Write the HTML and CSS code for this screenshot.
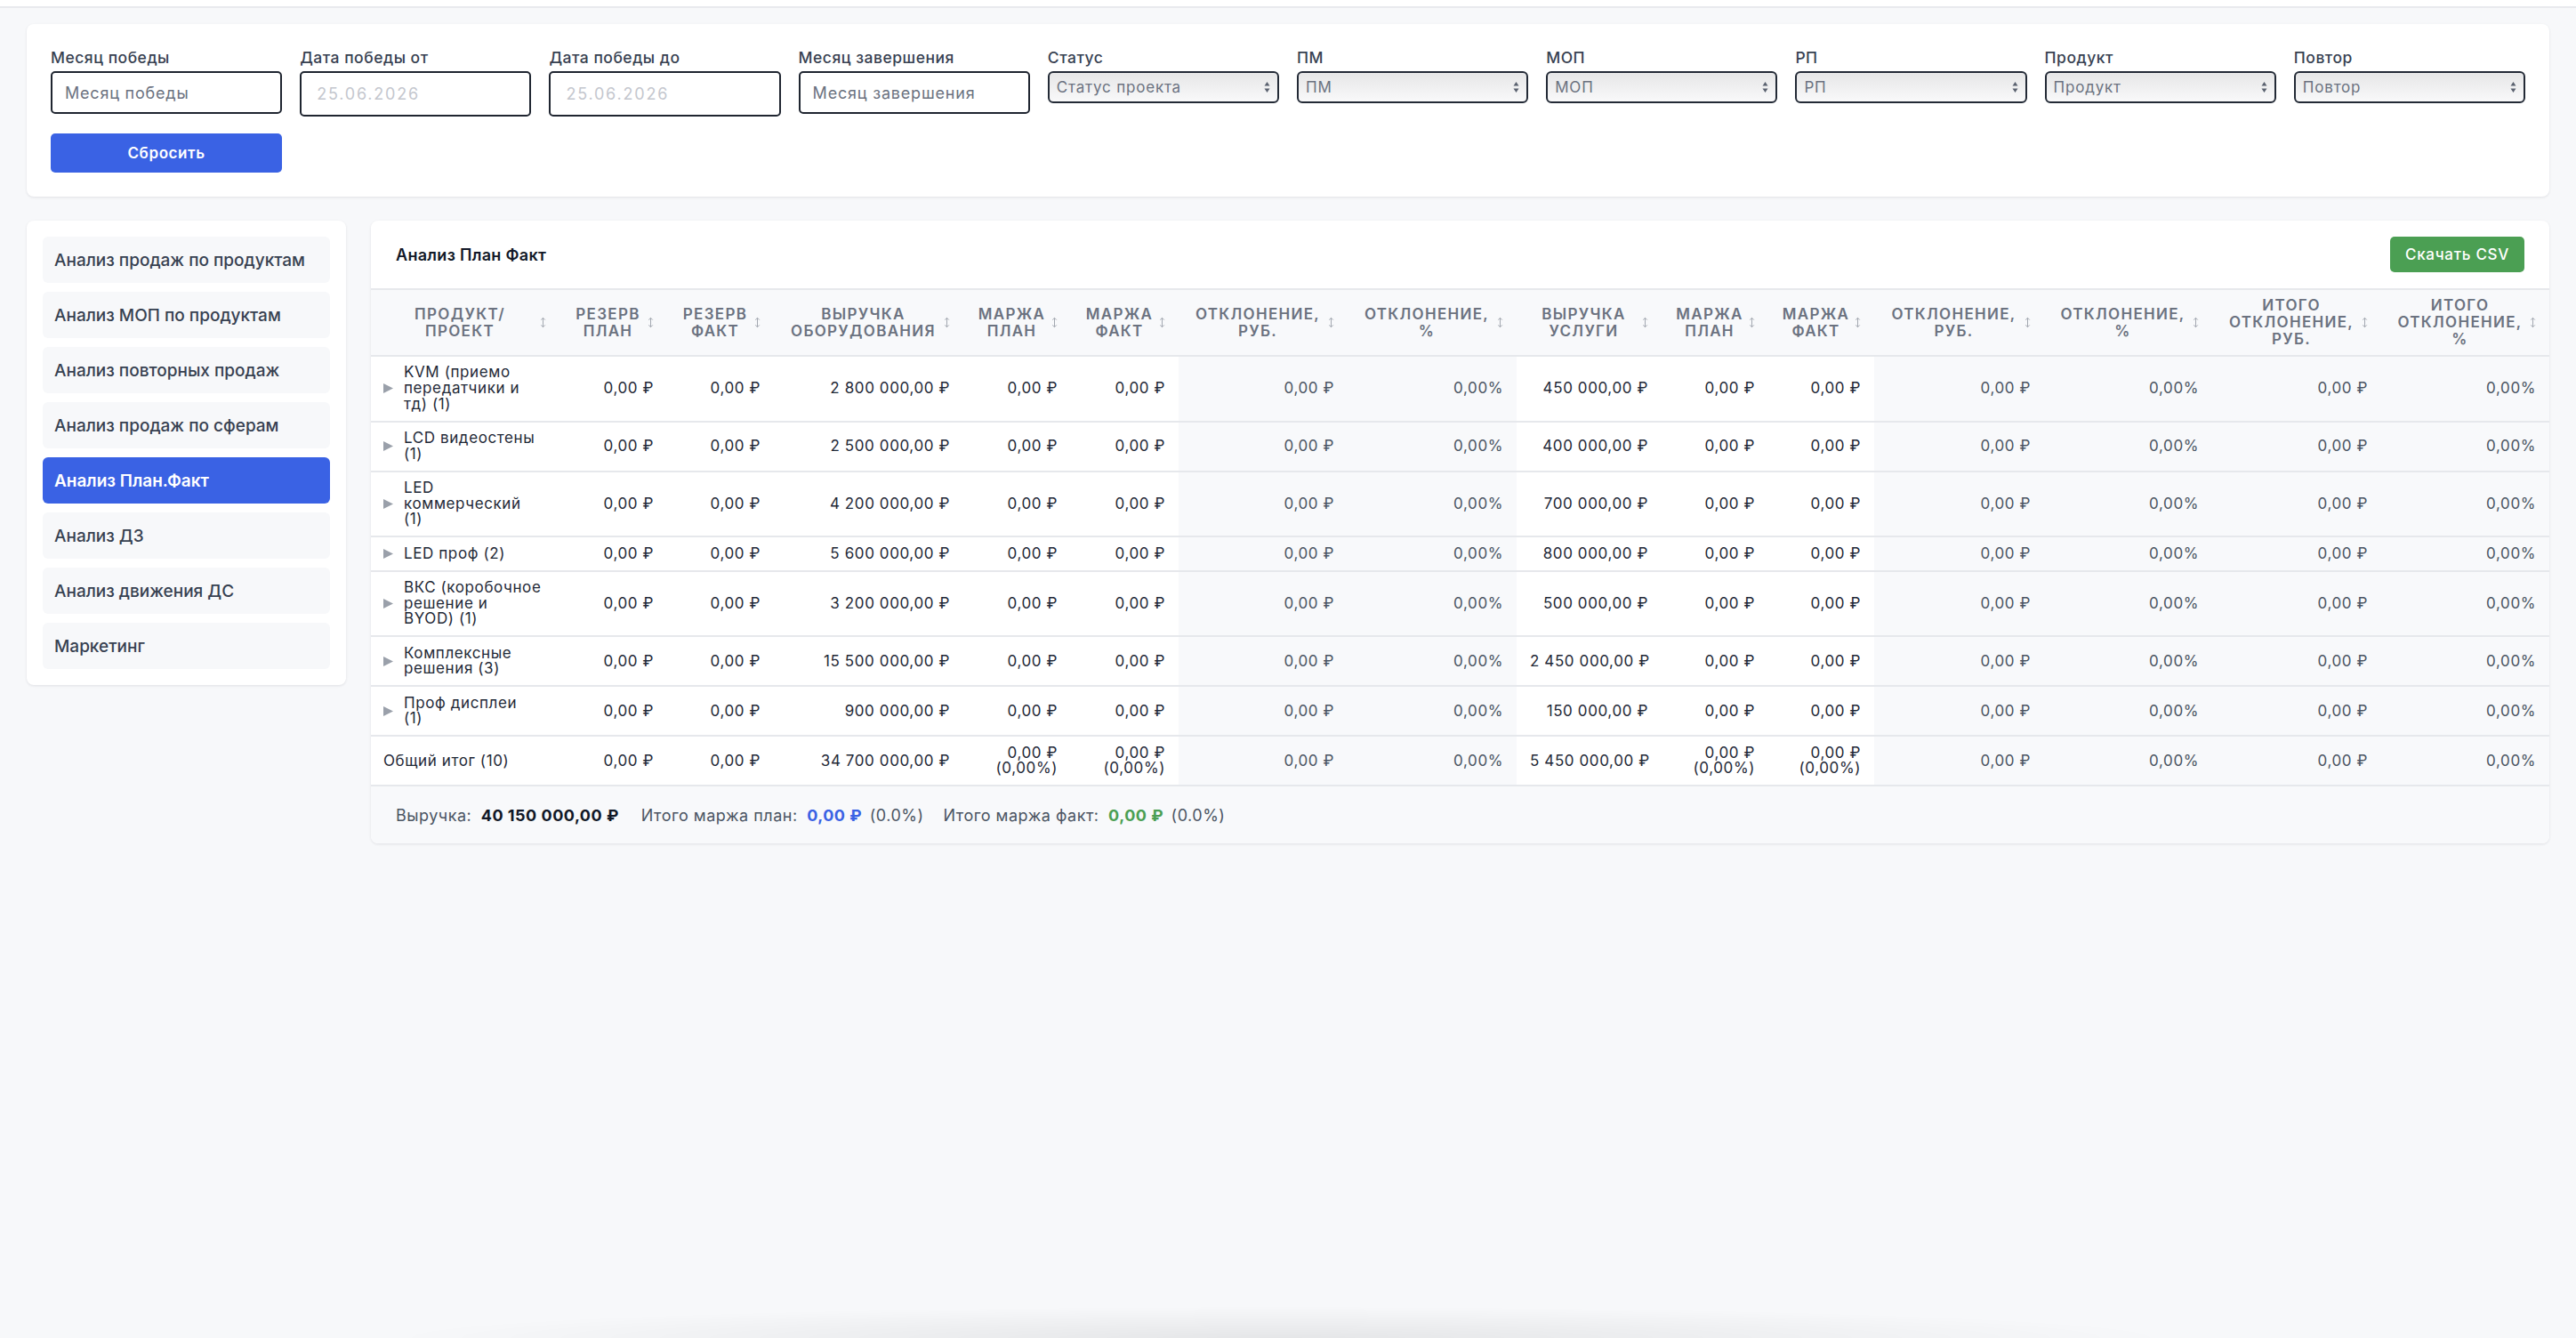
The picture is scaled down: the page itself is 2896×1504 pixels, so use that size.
FILE: index.html
```html
<!DOCTYPE html>
<html lang="ru">
<head>
    <meta charset="UTF-8">
    <meta name="viewport" content="width=device-width, initial-scale=1.0">
    <title>Анализ План Факт</title>
    <link rel="stylesheet" href="styles.css">
</head>
<body>
    <div class="topbar"></div>

    <div class="page">
        <section class="card filters">
            <div class="filters-grid">
                <div class="field">
                    <label>Месяц победы</label>
                    <input class="input" type="text" placeholder="Месяц победы">
                </div>
                <div class="field">
                    <label>Дата победы от</label>
                    <input class="input date" type="text" value="25.06.2026" readonly>
                </div>
                <div class="field">
                    <label>Дата победы до</label>
                    <input class="input date" type="text" value="25.06.2026" readonly>
                </div>
                <div class="field">
                    <label>Месяц завершения</label>
                    <input class="input" type="text" placeholder="Месяц завершения">
                </div>
                <div class="field">
                    <label>Статус</label>
                    <div class="select">
                        <select><option>Статус проекта</option></select>
                        <svg class="select-arrows" width="7" height="14" viewBox="0 0 7 14"><path d="M3.5 1 6.5 5.5h-6zM3.5 13 0.5 8.5h6z" fill="#5b6270"/></svg>
                    </div>
                </div>
                <div class="field">
                    <label>ПМ</label>
                    <div class="select">
                        <select><option>ПМ</option></select>
                        <svg class="select-arrows" width="7" height="14" viewBox="0 0 7 14"><path d="M3.5 1 6.5 5.5h-6zM3.5 13 0.5 8.5h6z" fill="#5b6270"/></svg>
                    </div>
                </div>
                <div class="field">
                    <label>МОП</label>
                    <div class="select">
                        <select><option>МОП</option></select>
                        <svg class="select-arrows" width="7" height="14" viewBox="0 0 7 14"><path d="M3.5 1 6.5 5.5h-6zM3.5 13 0.5 8.5h6z" fill="#5b6270"/></svg>
                    </div>
                </div>
                <div class="field">
                    <label>РП</label>
                    <div class="select">
                        <select><option>РП</option></select>
                        <svg class="select-arrows" width="7" height="14" viewBox="0 0 7 14"><path d="M3.5 1 6.5 5.5h-6zM3.5 13 0.5 8.5h6z" fill="#5b6270"/></svg>
                    </div>
                </div>
                <div class="field">
                    <label>Продукт</label>
                    <div class="select">
                        <select><option>Продукт</option></select>
                        <svg class="select-arrows" width="7" height="14" viewBox="0 0 7 14"><path d="M3.5 1 6.5 5.5h-6zM3.5 13 0.5 8.5h6z" fill="#5b6270"/></svg>
                    </div>
                </div>
                <div class="field">
                    <label>Повтор</label>
                    <div class="select">
                        <select><option>Повтор</option></select>
                        <svg class="select-arrows" width="7" height="14" viewBox="0 0 7 14"><path d="M3.5 1 6.5 5.5h-6zM3.5 13 0.5 8.5h6z" fill="#5b6270"/></svg>
                    </div>
                </div>
                <button class="btn btn-primary">Сбросить</button>
            </div>
        </section>

        <div class="content">
            <aside class="card sidebar">
                <nav class="nav">
                    <a class="nav-item" href="#">Анализ продаж по продуктам</a>
                    <a class="nav-item" href="#">Анализ МОП по продуктам</a>
                    <a class="nav-item" href="#">Анализ повторных продаж</a>
                    <a class="nav-item" href="#">Анализ продаж по сферам</a>
                    <a class="nav-item active" href="#">Анализ План.Факт</a>
                    <a class="nav-item" href="#">Анализ ДЗ</a>
                    <a class="nav-item" href="#">Анализ движения ДС</a>
                    <a class="nav-item" href="#">Маркетинг</a>
                </nav>
            </aside>

            <section class="card report">
                <div class="report-head">
                    <h2>Анализ План Факт</h2>
                    <button class="btn btn-success">Скачать CSV</button>
                </div>

                <table class="plan-table">
                    <colgroup>
                        <col style="width: 212px">
                        <col style="width: 121px">
                        <col style="width: 120px">
                        <col style="width: 213px">
                        <col style="width: 121px">
                        <col style="width: 121px">
                        <col style="width: 190px">
                        <col style="width: 190px">
                        <col style="width: 163px">
                        <col style="width: 120px">
                        <col style="width: 119px">
                        <col style="width: 191px">
                        <col style="width: 189px">
                        <col style="width: 190px">
                        <col style="width: 189px">
                    </colgroup>
                    <thead>
                        <tr>
                            <th><div class="th"><span>Продукт/<br>проект</span><svg class="sort" width="7" height="13" viewBox="0 0 7 13"><path d="M3.5 1.5v10M1.2 3.6 3.5 1.3l2.3 2.3M1.2 9.4l2.3 2.3 2.3-2.3" fill="none" stroke="#a3a8b1" stroke-width="1"/></svg></div></th>
                            <th><div class="th"><span>Резерв<br>план</span><svg class="sort" width="7" height="13" viewBox="0 0 7 13"><path d="M3.5 1.5v10M1.2 3.6 3.5 1.3l2.3 2.3M1.2 9.4l2.3 2.3 2.3-2.3" fill="none" stroke="#a3a8b1" stroke-width="1"/></svg></div></th>
                            <th><div class="th"><span>Резерв<br>факт</span><svg class="sort" width="7" height="13" viewBox="0 0 7 13"><path d="M3.5 1.5v10M1.2 3.6 3.5 1.3l2.3 2.3M1.2 9.4l2.3 2.3 2.3-2.3" fill="none" stroke="#a3a8b1" stroke-width="1"/></svg></div></th>
                            <th><div class="th"><span>Выручка<br>оборудования</span><svg class="sort" width="7" height="13" viewBox="0 0 7 13"><path d="M3.5 1.5v10M1.2 3.6 3.5 1.3l2.3 2.3M1.2 9.4l2.3 2.3 2.3-2.3" fill="none" stroke="#a3a8b1" stroke-width="1"/></svg></div></th>
                            <th><div class="th"><span>Маржа<br>план</span><svg class="sort" width="7" height="13" viewBox="0 0 7 13"><path d="M3.5 1.5v10M1.2 3.6 3.5 1.3l2.3 2.3M1.2 9.4l2.3 2.3 2.3-2.3" fill="none" stroke="#a3a8b1" stroke-width="1"/></svg></div></th>
                            <th><div class="th"><span>Маржа<br>факт</span><svg class="sort" width="7" height="13" viewBox="0 0 7 13"><path d="M3.5 1.5v10M1.2 3.6 3.5 1.3l2.3 2.3M1.2 9.4l2.3 2.3 2.3-2.3" fill="none" stroke="#a3a8b1" stroke-width="1"/></svg></div></th>
                            <th><div class="th"><span>Отклонение,<br>руб.</span><svg class="sort" width="7" height="13" viewBox="0 0 7 13"><path d="M3.5 1.5v10M1.2 3.6 3.5 1.3l2.3 2.3M1.2 9.4l2.3 2.3 2.3-2.3" fill="none" stroke="#a3a8b1" stroke-width="1"/></svg></div></th>
                            <th><div class="th"><span>Отклонение,<br>%</span><svg class="sort" width="7" height="13" viewBox="0 0 7 13"><path d="M3.5 1.5v10M1.2 3.6 3.5 1.3l2.3 2.3M1.2 9.4l2.3 2.3 2.3-2.3" fill="none" stroke="#a3a8b1" stroke-width="1"/></svg></div></th>
                            <th><div class="th"><span>Выручка<br>услуги</span><svg class="sort" width="7" height="13" viewBox="0 0 7 13"><path d="M3.5 1.5v10M1.2 3.6 3.5 1.3l2.3 2.3M1.2 9.4l2.3 2.3 2.3-2.3" fill="none" stroke="#a3a8b1" stroke-width="1"/></svg></div></th>
                            <th><div class="th"><span>Маржа<br>план</span><svg class="sort" width="7" height="13" viewBox="0 0 7 13"><path d="M3.5 1.5v10M1.2 3.6 3.5 1.3l2.3 2.3M1.2 9.4l2.3 2.3 2.3-2.3" fill="none" stroke="#a3a8b1" stroke-width="1"/></svg></div></th>
                            <th><div class="th"><span>Маржа<br>факт</span><svg class="sort" width="7" height="13" viewBox="0 0 7 13"><path d="M3.5 1.5v10M1.2 3.6 3.5 1.3l2.3 2.3M1.2 9.4l2.3 2.3 2.3-2.3" fill="none" stroke="#a3a8b1" stroke-width="1"/></svg></div></th>
                            <th><div class="th"><span>Отклонение,<br>руб.</span><svg class="sort" width="7" height="13" viewBox="0 0 7 13"><path d="M3.5 1.5v10M1.2 3.6 3.5 1.3l2.3 2.3M1.2 9.4l2.3 2.3 2.3-2.3" fill="none" stroke="#a3a8b1" stroke-width="1"/></svg></div></th>
                            <th><div class="th"><span>Отклонение,<br>%</span><svg class="sort" width="7" height="13" viewBox="0 0 7 13"><path d="M3.5 1.5v10M1.2 3.6 3.5 1.3l2.3 2.3M1.2 9.4l2.3 2.3 2.3-2.3" fill="none" stroke="#a3a8b1" stroke-width="1"/></svg></div></th>
                            <th><div class="th"><span>Итого<br>отклонение,<br>руб.</span><svg class="sort" width="7" height="13" viewBox="0 0 7 13"><path d="M3.5 1.5v10M1.2 3.6 3.5 1.3l2.3 2.3M1.2 9.4l2.3 2.3 2.3-2.3" fill="none" stroke="#a3a8b1" stroke-width="1"/></svg></div></th>
                            <th><div class="th"><span>Итого<br>отклонение,<br>%</span><svg class="sort" width="7" height="13" viewBox="0 0 7 13"><path d="M3.5 1.5v10M1.2 3.6 3.5 1.3l2.3 2.3M1.2 9.4l2.3 2.3 2.3-2.3" fill="none" stroke="#a3a8b1" stroke-width="1"/></svg></div></th>
                        </tr>
                    </thead>
                    <tbody>
                        <tr>
                            <td class="name"><div class="product"><svg class="caret" width="11" height="11" viewBox="0 0 11 11"><path d="M0 0 11 5.5 0 11z" fill="#9aa0aa"/></svg><span>KVM (приемо<br>передатчики и<br>тд) (1)</span></div></td>
                            <td>0,00 ₽</td><td>0,00 ₽</td><td>2 800 000,00 ₽</td><td>0,00 ₽</td><td>0,00 ₽</td>
                            <td>0,00 ₽</td><td>0,00%</td>
                            <td>450 000,00 ₽</td><td>0,00 ₽</td><td>0,00 ₽</td>
                            <td>0,00 ₽</td><td>0,00%</td><td>0,00 ₽</td><td>0,00%</td>
                        </tr>
                        <tr>
                            <td class="name"><div class="product"><svg class="caret" width="11" height="11" viewBox="0 0 11 11"><path d="M0 0 11 5.5 0 11z" fill="#9aa0aa"/></svg><span>LCD видеостены<br>(1)</span></div></td>
                            <td>0,00 ₽</td><td>0,00 ₽</td><td>2 500 000,00 ₽</td><td>0,00 ₽</td><td>0,00 ₽</td>
                            <td>0,00 ₽</td><td>0,00%</td>
                            <td>400 000,00 ₽</td><td>0,00 ₽</td><td>0,00 ₽</td>
                            <td>0,00 ₽</td><td>0,00%</td><td>0,00 ₽</td><td>0,00%</td>
                        </tr>
                        <tr>
                            <td class="name"><div class="product"><svg class="caret" width="11" height="11" viewBox="0 0 11 11"><path d="M0 0 11 5.5 0 11z" fill="#9aa0aa"/></svg><span>LED<br>коммерческий<br>(1)</span></div></td>
                            <td>0,00 ₽</td><td>0,00 ₽</td><td>4 200 000,00 ₽</td><td>0,00 ₽</td><td>0,00 ₽</td>
                            <td>0,00 ₽</td><td>0,00%</td>
                            <td>700 000,00 ₽</td><td>0,00 ₽</td><td>0,00 ₽</td>
                            <td>0,00 ₽</td><td>0,00%</td><td>0,00 ₽</td><td>0,00%</td>
                        </tr>
                        <tr>
                            <td class="name"><div class="product"><svg class="caret" width="11" height="11" viewBox="0 0 11 11"><path d="M0 0 11 5.5 0 11z" fill="#9aa0aa"/></svg><span>LED проф (2)</span></div></td>
                            <td>0,00 ₽</td><td>0,00 ₽</td><td>5 600 000,00 ₽</td><td>0,00 ₽</td><td>0,00 ₽</td>
                            <td>0,00 ₽</td><td>0,00%</td>
                            <td>800 000,00 ₽</td><td>0,00 ₽</td><td>0,00 ₽</td>
                            <td>0,00 ₽</td><td>0,00%</td><td>0,00 ₽</td><td>0,00%</td>
                        </tr>
                        <tr>
                            <td class="name"><div class="product"><svg class="caret" width="11" height="11" viewBox="0 0 11 11"><path d="M0 0 11 5.5 0 11z" fill="#9aa0aa"/></svg><span>ВКС (коробочное<br>решение и<br>BYOD) (1)</span></div></td>
                            <td>0,00 ₽</td><td>0,00 ₽</td><td>3 200 000,00 ₽</td><td>0,00 ₽</td><td>0,00 ₽</td>
                            <td>0,00 ₽</td><td>0,00%</td>
                            <td>500 000,00 ₽</td><td>0,00 ₽</td><td>0,00 ₽</td>
                            <td>0,00 ₽</td><td>0,00%</td><td>0,00 ₽</td><td>0,00%</td>
                        </tr>
                        <tr>
                            <td class="name"><div class="product"><svg class="caret" width="11" height="11" viewBox="0 0 11 11"><path d="M0 0 11 5.5 0 11z" fill="#9aa0aa"/></svg><span>Комплексные<br>решения (3)</span></div></td>
                            <td>0,00 ₽</td><td>0,00 ₽</td><td>15 500 000,00 ₽</td><td>0,00 ₽</td><td>0,00 ₽</td>
                            <td>0,00 ₽</td><td>0,00%</td>
                            <td>2 450 000,00 ₽</td><td>0,00 ₽</td><td>0,00 ₽</td>
                            <td>0,00 ₽</td><td>0,00%</td><td>0,00 ₽</td><td>0,00%</td>
                        </tr>
                        <tr>
                            <td class="name"><div class="product"><svg class="caret" width="11" height="11" viewBox="0 0 11 11"><path d="M0 0 11 5.5 0 11z" fill="#9aa0aa"/></svg><span>Проф дисплеи<br>(1)</span></div></td>
                            <td>0,00 ₽</td><td>0,00 ₽</td><td>900 000,00 ₽</td><td>0,00 ₽</td><td>0,00 ₽</td>
                            <td>0,00 ₽</td><td>0,00%</td>
                            <td>150 000,00 ₽</td><td>0,00 ₽</td><td>0,00 ₽</td>
                            <td>0,00 ₽</td><td>0,00%</td><td>0,00 ₽</td><td>0,00%</td>
                        </tr>
                        <tr class="total">
                            <td class="name">Общий итог (10)</td>
                            <td>0,00 ₽</td><td>0,00 ₽</td><td>34 700 000,00 ₽</td><td>0,00 ₽<br>(0,00%)</td><td>0,00 ₽<br>(0,00%)</td>
                            <td>0,00 ₽</td><td>0,00%</td>
                            <td>5 450 000,00 ₽</td><td>0,00 ₽<br>(0,00%)</td><td>0,00 ₽<br>(0,00%)</td>
                            <td>0,00 ₽</td><td>0,00%</td><td>0,00 ₽</td><td>0,00%</td>
                        </tr>
                    </tbody>
                </table>

                <div class="report-foot">
                    <span class="stat">Выручка: <b>40 150 000,00 ₽</b></span>
                    <span class="stat">Итого маржа план: <b class="blue">0,00 ₽</b> (0.0%)</span>
                    <span class="stat">Итого маржа факт: <b class="green">0,00 ₽</b> (0.0%)</span>
                </div>
            </section>
        </div>
    </div>

    <div class="bottom-shade"></div>
</body>
</html>
```

FILE: styles.css
```css
body {
    margin: 0;
    background-color: #f7f8fa;
    font-family: Inter, "Noto Sans", sans-serif;
    color: #1f2937;
    letter-spacing: 0.5px;
}

.topbar {
    height: 7px;
    background-color: #fff;
    border-bottom: 2px solid #e8e9ed;
}

.page {
    padding: 18px 30px;
}

.card {
    background-color: #fff;
    border-radius: 8px;
    box-shadow: 0 1px 3px rgba(16, 24, 40, 0.1);
}

/* filters */

.filters {
    padding: 27px;
    margin-bottom: 27px;
}

.filters-grid {
    display: grid;
    grid-template-columns: repeat(10, 1fr);
    column-gap: 20px;
    row-gap: 19px;
    align-items: start;
}

.field label {
    display: block;
    font-size: 17.5px;
    line-height: 22px;
    font-weight: 500;
    color: #374151;
    margin-bottom: 4px;
}

.input {
    display: block;
    width: 100%;
    height: 48px;
    box-sizing: border-box;
    border: 2px solid #1f2530;
    border-radius: 5px;
    padding: 0 14px;
    font-family: inherit;
    font-size: 18px;
    letter-spacing: 0.8px;
    color: #6b7280;
    background: #fff;
    outline: none;
}

.input::placeholder {
    color: #6b7280;
}

.input.date {
    height: 51px;
    padding-left: 17px;
    font-size: 18px;
    letter-spacing: 1.8px;
    color: #c4c7ce;
}

.select {
    position: relative;
}

.select select {
    display: block;
    width: 100%;
    height: 36px;
    appearance: none;
    -webkit-appearance: none;
    border: 2px solid #232a36;
    border-radius: 6px;
    padding: 0 8px;
    font-family: inherit;
    font-size: 17px;
    letter-spacing: 0.8px;
    color: #6b7280;
    background: linear-gradient(#e6e6e7, #f9f9fa);
}

.select-arrows {
    position: absolute;
    right: 10px;
    top: 11px;
    pointer-events: none;
}

.btn {
    border: none;
    border-radius: 5px;
    font-family: inherit;
    color: #fff;
    cursor: pointer;
}

.btn-primary {
    grid-column: 1;
    height: 44px;
    background-color: #3a62e4;
    font-size: 17px;
    font-weight: 600;
    letter-spacing: 0.6px;
}

.btn-success {
    height: 40px;
    width: 151px;
    background-color: #4b9f53;
    font-size: 17px;
    font-weight: 500;
    letter-spacing: 0.7px;
}

/* layout */

.content {
    display: flex;
    gap: 28px;
    align-items: flex-start;
}

.sidebar {
    width: 359px;
    flex-shrink: 0;
    box-sizing: border-box;
    padding: 18px;
}

.nav {
    display: flex;
    flex-direction: column;
    gap: 10px;
}

.nav-item {
    display: flex;
    align-items: center;
    height: 52px;
    padding: 0 13px;
    border-radius: 6px;
    background-color: #f7f8fa;
    color: #374151;
    font-size: 19px;
    font-weight: 500;
    letter-spacing: 0;
    text-decoration: none;
}

.nav-item.active {
    background-color: #3a62e4;
    color: #fff;
    font-weight: 600;
}

/* report */

.report {
    flex: 1;
    overflow: hidden;
}

.report-head {
    display: flex;
    align-items: center;
    justify-content: space-between;
    height: 76px;
    padding: 0 28px;
    border-bottom: 2px solid #e6e8ec;
}

.report-head h2 {
    margin: 0;
    font-size: 18px;
    font-weight: 600;
    letter-spacing: 0.3px;
    color: #111827;
}

.plan-table {
    width: 100%;
    table-layout: fixed;
    border-collapse: collapse;
    font-size: 17px;
}

.plan-table th {
    height: 73px;
    padding: 0 15px 0 14px;
    background-color: #f8f9fb;
    border-bottom: 2px solid #e6e8ec;
    color: #6b7280;
    font-size: 17px;
    font-weight: 600;
    line-height: 19px;
    letter-spacing: 1.3px;
    text-transform: uppercase;
}

.th {
    display: flex;
    align-items: center;
}

.th span {
    flex: 1;
    text-align: center;
}

.sort {
    flex-shrink: 0;
    margin-left: 4px;
}

.plan-table td {
    padding: 9.3px 15px;
    line-height: 17.7px;
    border-bottom: 2px solid #e6e8ec;
    text-align: right;
    white-space: nowrap;
    letter-spacing: 0.6px;
    color: #1f2937;
}

.plan-table td:nth-child(7),
.plan-table td:nth-child(8),
.plan-table td:nth-child(n+12) {
    background-color: #f8f9fb;
    color: #4b5563;
}

.plan-table td.name {
    text-align: left;
    padding-left: 14px;
}

.product {
    display: flex;
    align-items: center;
    gap: 12px;
}

.caret {
    flex-shrink: 0;
}

.report-foot {
    display: flex;
    align-items: center;
    height: 64px;
    padding: 0 28px;
    background-color: #f8f9fb;
    font-size: 18px;
    color: #4b5563;
}

.stat {
    margin-right: 22px;
}

.stat b {
    margin: 0 3px 0 5px;
    color: #111827;
    font-weight: 700;
}

.stat b.blue {
    color: #3a62e4;
}

.stat b.green {
    color: #4b9f53;
}

/* soft shadow along the bottom edge of the screen */
.bottom-shade {
    position: fixed;
    left: 425px;
    bottom: 0;
    width: 2030px;
    height: 36px;
    background: radial-gradient(ellipse at 50% 100%, rgba(0, 0, 0, 0.07), rgba(0, 0, 0, 0) 70%);
    pointer-events: none;
}
```
